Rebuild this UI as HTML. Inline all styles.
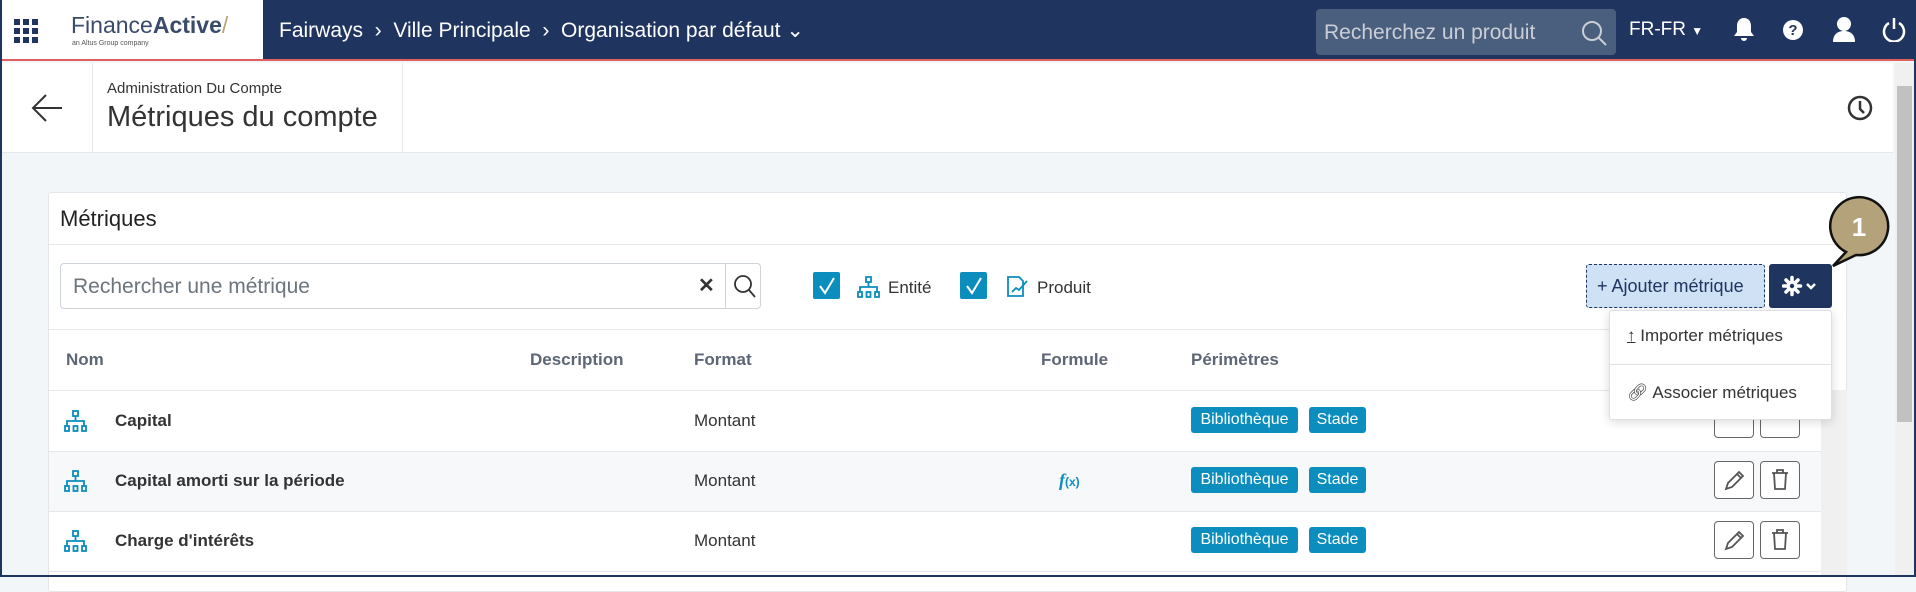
<!DOCTYPE html>
<html><head><meta charset="utf-8"><style>
*{box-sizing:border-box;margin:0;padding:0}
body{width:1916px;height:577px;overflow:hidden;font-family:"Liberation Sans",sans-serif;background:#f3f6f9;position:relative;color:#333}
.frame{position:absolute;inset:0;border:2px solid #1f3560;border-top:none;pointer-events:none;z-index:50}
.hdr{position:absolute;left:0;top:0;width:1916px;height:61px;background:#1f3560;border-bottom:2px solid #e06060}
.logo{position:absolute;left:0;top:0;width:263px;height:59px;background:#fff}
.abs{position:absolute}
.bc{position:absolute;top:18px;color:#fff;font-size:21px}
.srch{position:absolute;left:1316px;top:9px;width:300px;height:46px;background:#4a5e7e;border-radius:4px;color:#c9ced7;font-size:21px;padding:12px 8px}
.sub{position:absolute;left:2px;top:63px;width:1891px;height:90px;background:#fff;border-bottom:1px solid #e3e6ea}
.sb{position:absolute;left:1895px;top:63px;width:19px;height:514px;background:#f0f0f0}
.card{position:absolute;left:48px;top:192px;width:1799px;height:400px;background:#fff;border:1px solid #e3e6ea;border-radius:3px}
.th{position:absolute;top:350px;font-size:17px;font-weight:bold;color:#5d6675}
.row{position:absolute;left:49px;width:1772px;height:60px;border-top:1px solid #e5e7eb}
.nm{position:absolute;left:66px;font-size:17px;font-weight:bold;color:#333}
.fmt{position:absolute;left:645px;font-size:17px;color:#333}
.bd{position:absolute;height:26px;background:#0b8dbd;color:#fff;font-size:16px;border-radius:3px;padding:4px 0;text-align:center}
.b1{left:1191px;width:107px}.b2{left:1309px;width:57px}
.ib{position:absolute;width:40px;height:38px;border:1px solid #666;border-radius:4px;background:#fff}
.cb{position:absolute;top:272px;width:27px;height:27px;background:#0b8dbd;border-radius:2px}
</style></head><body>
<div class="hdr"></div>
<div class="logo">
 <svg class="abs" style="left:14px;top:19px" width="24" height="24"><g fill="#1f3560"><rect x="0" y="0" width="6" height="6"/><rect x="9" y="0" width="6" height="6"/><rect x="18" y="0" width="6" height="6"/><rect x="0" y="9" width="6" height="6"/><rect x="9" y="9" width="6" height="6"/><rect x="18" y="9" width="6" height="6"/><rect x="0" y="18" width="6" height="6"/><rect x="9" y="18" width="6" height="6"/><rect x="18" y="18" width="6" height="6"/></g></svg>
 <div class="abs" style="left:71px;top:12px;font-size:23px;color:#3a4a6a">Finance<b>Active</b><span style="color:#b8a575">/</span></div>
 <div class="abs" style="left:72px;top:40px;font-size:7px;color:#555">an Altus Group company</div>
</div>
<div class="bc" style="left:279px">Fairways &nbsp;›&nbsp; Ville Principale &nbsp;›&nbsp; Organisation par défaut ⌄</div>
<div class="srch">Recherchez un produit
 <svg class="abs" style="left:265px;top:11px" width="26" height="26"><circle cx="11" cy="11" r="9" fill="none" stroke="#c9ced7" stroke-width="2"/><line x1="17" y1="17" x2="25" y2="25" stroke="#c9ced7" stroke-width="2"/></svg></div>
<div class="abs" style="left:1629px;top:19px;color:#fff;font-size:19px">FR-FR <span style="font-size:12px">▼</span></div>
<svg class="abs" style="left:1733px;top:17px" width="22" height="26"><path d="M11 1c-5 0-7 4-7 8v6l-3 4h20l-3-4V9c0-4-2-8-7-8z M8 21a3 3 0 0 0 6 0" fill="#fff"/></svg>
<svg class="abs" style="left:1782px;top:19px" width="22" height="22"><circle cx="11" cy="11" r="10" fill="#fff"/><text x="11" y="16" text-anchor="middle" font-size="15" font-weight="bold" fill="#1f3560" font-family="Liberation Sans">?</text></svg>
<svg class="abs" style="left:1832px;top:16px" width="24" height="26"><circle cx="12" cy="8" r="7" fill="#fff"/><path d="M1 26c0-8 5-11 11-11s11 3 11 11z" fill="#fff"/></svg>
<svg class="abs" style="left:1882px;top:16px" width="24" height="26"><path d="M7 7a10 10 0 1 0 10 0" fill="none" stroke="#fff" stroke-width="2.5"/><line x1="12" y1="2" x2="12" y2="13" stroke="#fff" stroke-width="2.5"/></svg>

<div class="sub">
 <svg class="abs" style="left:28px;top:30px" width="34" height="30"><path d="M32 15H3M16 2L3 15l13 13" fill="none" stroke="#333" stroke-width="2"/></svg>
 <div class="abs" style="left:90px;top:0;width:1px;height:89px;background:#e6e8eb"></div>
 <div class="abs" style="left:400px;top:0;width:1px;height:89px;background:#e6e8eb"></div>
 <div class="abs" style="left:105px;top:17px;font-size:15px;color:#333">Administration Du Compte</div>
 <div class="abs" style="left:105px;top:38px;font-size:29px;color:#333">Métriques du compte</div>
 <svg class="abs" style="left:1845px;top:32px" width="26" height="26"><circle cx="13" cy="13" r="11" fill="none" stroke="#333" stroke-width="2.5"/><path d="M13 6v8l4 4" fill="none" stroke="#333" stroke-width="2.5"/></svg>
</div>
<div class="sb"><div style="position:absolute;left:2px;top:23px;width:15px;height:336px;background:#c1c1c1"></div></div>

<div class="card">
 <div class="abs" style="left:11px;top:13px;font-size:22px;color:#222">Métriques</div>
 <div class="abs" style="left:0;top:51px;width:1797px;height:1px;background:#e5e7eb"></div>
</div>
<div class="abs" style="left:60px;top:263px;width:701px;height:46px;border:1px solid #ced4da;border-radius:4px;background:#fff">
 <div class="abs" style="left:12px;top:11px;font-size:21px;color:#6c757d">Rechercher une métrique</div>
 <div class="abs" style="left:637px;top:9px;font-size:20px;font-weight:bold;color:#333">✕</div>
 <div class="abs" style="left:664px;top:0;width:1px;height:44px;background:#ced4da"></div>
 <svg class="abs" style="left:672px;top:10px" width="24" height="26"><circle cx="10" cy="10" r="8" fill="none" stroke="#333" stroke-width="1.8"/><line x1="16" y1="16" x2="22" y2="23" stroke="#333" stroke-width="1.8"/></svg>
</div>
<div class="cb" style="left:813px"><svg width="27" height="27"><path d="M7 14l5 7 9-15" fill="none" stroke="#fff" stroke-width="2"/></svg></div>
<svg class="abs" style="left:857px;top:276px" width="24" height="22"><g fill="none" stroke="#0b8dbd" stroke-width="1.8"><rect x="9" y="1" width="5" height="5"/><path d="M11.5 6v5M3 16v-5h17v5"/><rect x="1" y="16" width="4" height="5"/><rect x="9.5" y="16" width="4" height="5"/><rect x="18" y="16" width="4" height="5"/></g></svg>
<div class="abs" style="left:888px;top:278px;font-size:17px;color:#333">Entité</div>
<div class="cb" style="left:960px"><svg width="27" height="27"><path d="M7 14l5 7 9-15" fill="none" stroke="#fff" stroke-width="2"/></svg></div>
<svg class="abs" style="left:1006px;top:275px" width="24" height="24"><path d="M2 2h11l4 4v15H2z" fill="none" stroke="#0b8dbd" stroke-width="1.8"/><path d="M6 17l4-4 3 2 8-9" fill="none" stroke="#0b8dbd" stroke-width="1.8"/></svg>
<div class="abs" style="left:1037px;top:278px;font-size:17px;color:#333">Produit</div>

<div class="abs" style="left:1586px;top:264px;width:179px;height:44px;background:#cfe1f5;border:1px dashed #1f3560;border-radius:3px;font-size:18px;color:#1f3560;padding:11px 10px">+ Ajouter métrique</div>
<div class="abs" style="left:1769px;top:264px;width:63px;height:44px;background:#1f3560;border-radius:3px">
 <svg class="abs" style="left:13px;top:11px" width="40" height="22"><g stroke="#fff" stroke-width="3.5" stroke-linecap="round"><line x1="10" y1="2.5" x2="10" y2="19.5"/><line x1="1.5" y1="11" x2="18.5" y2="11"/><line x1="4" y1="5" x2="16" y2="17"/><line x1="16" y1="5" x2="4" y2="17"/></g><circle cx="10" cy="11" r="5.5" fill="#fff"/><circle cx="10" cy="11" r="2.2" fill="#1f3560"/><path d="M25 9l4 4 4-4" fill="none" stroke="#fff" stroke-width="2.5"/></svg>
</div>

<div class="abs" style="left:49px;top:329px;width:1772px;height:1px;background:#e5e7eb"></div>
<div class="th" style="left:66px">Nom</div>
<div class="th" style="left:530px">Description</div>
<div class="th" style="left:694px">Format</div>
<div class="th" style="left:1041px">Formule</div>
<div class="th" style="left:1191px">Périmètres</div>
<div class="abs" style="left:1821px;top:390px;width:26px;height:187px;background:#f0f0f0"></div>

<div class="row" style="top:390px;background:#fff"></div>
<div class="row" style="top:451px;background:#f7f8fa"></div>
<div class="row" style="top:511px;background:#fff"></div>
<div class="abs" style="left:49px;top:571px;width:1772px;height:1px;background:#e5e7eb"></div>

<svg class="abs" style="left:64px;top:410px" width="24" height="22"><g fill="none" stroke="#0b8dbd" stroke-width="1.8"><rect x="9" y="1" width="5" height="5"/><path d="M11.5 6v5M3 16v-5h17v5"/><rect x="1" y="16" width="4" height="5"/><rect x="9.5" y="16" width="4" height="5"/><rect x="18" y="16" width="4" height="5"/></g></svg>
<svg class="abs" style="left:64px;top:470px" width="24" height="22"><g fill="none" stroke="#0b8dbd" stroke-width="1.8"><rect x="9" y="1" width="5" height="5"/><path d="M11.5 6v5M3 16v-5h17v5"/><rect x="1" y="16" width="4" height="5"/><rect x="9.5" y="16" width="4" height="5"/><rect x="18" y="16" width="4" height="5"/></g></svg>
<svg class="abs" style="left:64px;top:530px" width="24" height="22"><g fill="none" stroke="#0b8dbd" stroke-width="1.8"><rect x="9" y="1" width="5" height="5"/><path d="M11.5 6v5M3 16v-5h17v5"/><rect x="1" y="16" width="4" height="5"/><rect x="9.5" y="16" width="4" height="5"/><rect x="18" y="16" width="4" height="5"/></g></svg>

<div class="nm" style="left:115px;top:411px">Capital</div>
<div class="nm" style="left:115px;top:471px">Capital amorti sur la période</div>
<div class="nm" style="left:115px;top:531px">Charge d'intérêts</div>
<div class="fmt" style="left:694px;top:411px">Montant</div>
<div class="fmt" style="left:694px;top:471px">Montant</div>
<div class="fmt" style="left:694px;top:531px">Montant</div>
<div class="abs" style="left:1059px;top:470px;font-size:18px;font-weight:bold;font-style:italic;color:#0b8dbd;font-family:'Liberation Serif',serif">f<span style="font-size:12px;font-style:normal;font-family:'Liberation Sans'">(x)</span></div>

<div class="bd b1" style="top:407px">Bibliothèque</div><div class="bd b2" style="top:407px">Stade</div>
<div class="bd b1" style="top:467px">Bibliothèque</div><div class="bd b2" style="top:467px">Stade</div>
<div class="bd b1" style="top:527px">Bibliothèque</div><div class="bd b2" style="top:527px">Stade</div>

<div class="ib" style="left:1714px;top:400px"></div><div class="ib" style="left:1760px;top:400px"></div>
<div class="ib" style="left:1714px;top:461px"><svg width="38" height="36"><path d="M11 27l2-6 11-11 4 4-11 11z M22 12l4 4" fill="none" stroke="#555" stroke-width="1.8"/></svg></div>
<div class="ib" style="left:1760px;top:461px"><svg width="38" height="36"><path d="M11 11h16M16 11V8h6v3M13 11l1 16h10l1-16" fill="none" stroke="#555" stroke-width="1.8"/></svg></div>
<div class="ib" style="left:1714px;top:521px"><svg width="38" height="36"><path d="M11 27l2-6 11-11 4 4-11 11z M22 12l4 4" fill="none" stroke="#555" stroke-width="1.8"/></svg></div>
<div class="ib" style="left:1760px;top:521px"><svg width="38" height="36"><path d="M11 11h16M16 11V8h6v3M13 11l1 16h10l1-16" fill="none" stroke="#555" stroke-width="1.8"/></svg></div>

<div class="abs" style="left:1609px;top:310px;width:223px;height:110px;background:#fff;border:1px solid #dcdfe3;border-radius:3px;box-shadow:0 2px 10px rgba(0,0,0,.15);z-index:5">
 <div class="abs" style="left:17px;top:15px;font-size:17px;color:#333"><span style="text-decoration:underline">↑</span> Importer métriques</div>
 <div class="abs" style="left:0;top:53px;width:221px;height:1px;background:#e0e0e0"></div>
 <div class="abs" style="left:17px;top:72px;font-size:17px;color:#333">🔗︎ Associer métriques</div>
</div>

<svg class="abs" style="left:1820px;top:190px;z-index:10" width="80" height="85"><path d="M13 76 L26 62 A29 29 0 1 1 36 65 Z" fill="#b4a27a" stroke="#111" stroke-width="2.5"/><text x="39" y="46" text-anchor="middle" font-size="26" font-weight="bold" fill="#fff" font-family="Liberation Sans">1</text></svg>
<div class="frame"></div>
</body></html>
